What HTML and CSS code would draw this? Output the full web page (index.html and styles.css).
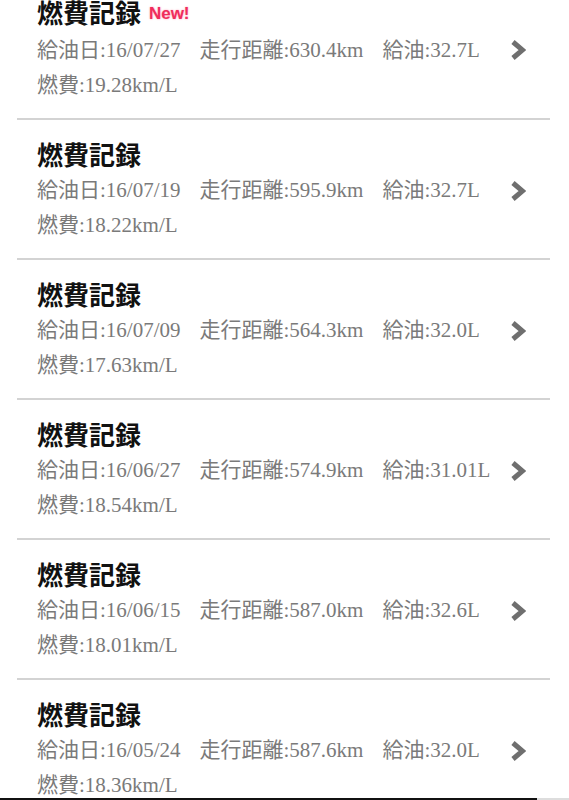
FILE: index.html
```html
<!DOCTYPE html>
<html lang="ja">
<head>
<meta charset="UTF-8" />
<meta name="viewport" content="width=device-width, initial-scale=1" />
<title>燃費記録</title>
<link rel="stylesheet" href="styles.css">
</head>
<body>

<ul class="log-list">
  <li class="log-item">
    <div class="log-body">
      <h2 class="log-title">燃費記録 <span class="badge-new">New!</span></h2>
      <p class="log-meta">
        <span>給油日:16/07/27</span>
        <span>走行距離:630.4km</span>
        <span>給油:32.7L</span>
        <span>燃費:19.28km/L</span>
      </p>
    </div>
    <svg class="chevron" viewBox="0 0 16 20" width="16" height="20"><polyline points="3,2 12.5,10 3,18" /></svg>
  </li>
  <li class="log-item">
    <div class="log-body">
      <h2 class="log-title">燃費記録</h2>
      <p class="log-meta">
        <span>給油日:16/07/19</span>
        <span>走行距離:595.9km</span>
        <span>給油:32.7L</span>
        <span>燃費:18.22km/L</span>
      </p>
    </div>
    <svg class="chevron" viewBox="0 0 16 20" width="16" height="20"><polyline points="3,2 12.5,10 3,18" /></svg>
  </li>
  <li class="log-item">
    <div class="log-body">
      <h2 class="log-title">燃費記録</h2>
      <p class="log-meta">
        <span>給油日:16/07/09</span>
        <span>走行距離:564.3km</span>
        <span>給油:32.0L</span>
        <span>燃費:17.63km/L</span>
      </p>
    </div>
    <svg class="chevron" viewBox="0 0 16 20" width="16" height="20"><polyline points="3,2 12.5,10 3,18" /></svg>
  </li>
  <li class="log-item">
    <div class="log-body">
      <h2 class="log-title">燃費記録</h2>
      <p class="log-meta">
        <span>給油日:16/06/27</span>
        <span>走行距離:574.9km</span>
        <span>給油:31.01L</span>
        <span>燃費:18.54km/L</span>
      </p>
    </div>
    <svg class="chevron" viewBox="0 0 16 20" width="16" height="20"><polyline points="3,2 12.5,10 3,18" /></svg>
  </li>
  <li class="log-item">
    <div class="log-body">
      <h2 class="log-title">燃費記録</h2>
      <p class="log-meta">
        <span>給油日:16/06/15</span>
        <span>走行距離:587.0km</span>
        <span>給油:32.6L</span>
        <span>燃費:18.01km/L</span>
      </p>
    </div>
    <svg class="chevron" viewBox="0 0 16 20" width="16" height="20"><polyline points="3,2 12.5,10 3,18" /></svg>
  </li>
  <li class="log-item">
    <div class="log-body">
      <h2 class="log-title">燃費記録</h2>
      <p class="log-meta">
        <span>給油日:16/05/24</span>
        <span>走行距離:587.6km</span>
        <span>給油:32.0L</span>
        <span>燃費:18.36km/L</span>
      </p>
    </div>
    <svg class="chevron" viewBox="0 0 16 20" width="16" height="20"><polyline points="3,2 12.5,10 3,18" /></svg>
  </li>
</ul>

<div class="bottom-bar">
  <div class="bar-main"></div>
  <div class="bar-side"></div>
</div>

</body>
</html>
```

FILE: styles.css
```css
body {
  margin: 0;
  background: #fff;
  font-family: "Liberation Serif", "Noto Sans CJK JP", serif;
  overflow: hidden;
}

/* list is scrolled a little, first row starts above the viewport */
.log-list {
  list-style: none;
  margin: -22px 19px 0 17px;
  padding: 0;
}
.log-item {
  display: flex;
  align-items: center;
  padding: 18px 24px 15px 20px;
  border-bottom: 2px solid #d3d3d3;
}
.log-body {
  flex: 1;
}
.log-title {
  margin: 0;
  font-family: "Noto Sans CJK JP", sans-serif;
  font-size: 26px;
  font-weight: 700;
  line-height: 32px;
  color: #111;
}
.badge-new {
  font-family: "Liberation Sans", sans-serif;
  font-size: 17px;
  font-weight: 700;
  color: #ef2d5c;
  text-shadow: 0 0 2px #ff9ab2;
  vertical-align: 4px;
  margin-left: 2px;
}
.log-meta {
  display: flex;
  flex-wrap: wrap;
  column-gap: 19px;
  width: 470px;
  margin: 3px 0 0;
  font-size: 21px;
  line-height: 35px;
  color: #7a7a7a;
}
.chevron {
  flex: none;
  fill: none;
  stroke: #6f6f6f;
  stroke-width: 5;
}

.bottom-bar {
  position: fixed;
  left: 0;
  right: 0;
  bottom: 0;
  height: 2px;
  display: flex;
}
.bar-main {
  width: 537px;
  background: #111;
}
.bar-side {
  flex: 1;
  background: #ddd;
}
```
